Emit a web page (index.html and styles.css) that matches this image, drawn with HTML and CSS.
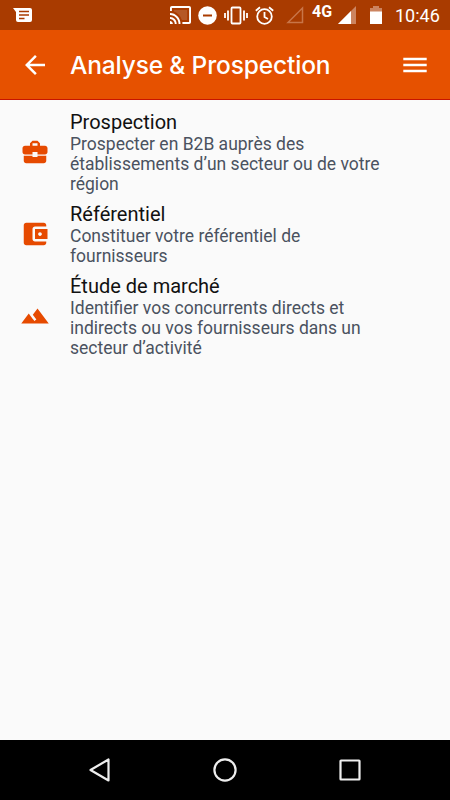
FILE: index.html
```html
<!DOCTYPE html>
<html lang="fr">
<head>
<meta charset="utf-8">
<title>Analyse &amp; Prospection</title>
<link rel="stylesheet" href="styles.css">
</head>
<body>
<div class="screen">
  <div class="status">
    <svg class="message" width="20" height="16" viewBox="0 0 20 16"><path fill="#fff" d="M0 1h17q2 0 2 2v10q0 2-2 2H5q-2 0-2-2V5z"/><path stroke="#a93b00" stroke-width="1.300" d="M6 4.500h10M6 8h10M6 11.500h5.500"/></svg>
    <svg class="cast" width="21" height="18" viewBox="1 3 22 18" preserveAspectRatio="none"><path fill="#fff" d="M21 3H3c-1.100 0-2 .9-2 2v3h2V5h18v14h-7v2h7c1.100 0 2-.9 2-2V5c0-1.100-.9-2-2-2zM1 18v3h3c0-1.660-1.340-3-3-3zm0-4v2c2.760 0 5 2.240 5 5h2c0-3.870-3.130-7-7-7zm0-4v2c4.970 0 9 4.030 9 9h2c0-6.080-4.930-11-11-11z"/><path fill="#fff" fill-opacity=".15" d="M5 7v1.600C9 9.900 12.100 13 13.400 17H19V7z"/></svg>
    <svg class="dnd" width="19" height="19" viewBox="0 0 19 19"><circle cx="9.500" cy="9.500" r="9.300" fill="#fff"/><path stroke="#a93b00" stroke-width="2" d="M5 9.500h9"/></svg>
    <svg class="vibrate" width="24" height="19" viewBox="0 0 24 19"><g fill="none" stroke="#fff" stroke-width="1.800"><rect x="7.500" y="1.500" width="9" height="16" rx="1"/><path d="M4 4.500v10M1 7v5M20 4.500v10M23 7v5"/></g></svg>
    <svg class="alarm" width="19" height="19" viewBox="0 0 19 19"><g fill="none" stroke="#fff" stroke-width="1.800"><circle cx="9.500" cy="10.500" r="7.300"/><path d="M9.500 6v5l3.500 2M.8 4.800 5 1.300M18.200 4.800 14 1.300"/></g></svg>
    <svg class="nosim" width="18" height="18" viewBox="0 0 18 18"><path fill="none" stroke="#c87548" stroke-width="1.500" d="M2 16.500 16.500 2v14.500z"/></svg>
    <span class="network">4G</span>
    <svg class="signal" width="18" height="18" viewBox="0 0 18 18"><path fill="#cc8460" d="M0 18 18 0v18z"/><path fill="#fff" d="M0 18 13 5v13z"/></svg>
    <svg class="battery" width="12" height="18" viewBox="0 0 12 18"><path fill="#cc8460" d="M0 2h3V0h6v2h3v5H0z"/><path fill="#fff" d="M0 5.500h12V18H0z"/></svg>
    <span class="clock">10:46</span>
  </div>
  <header class="bar">
    <svg class="back" width="30" height="30" viewBox="0 0 24 24"><path fill="#fff" d="M20 11H7.830l5.590-5.590L12 4l-8 8 8 8 1.410-1.410L7.830 13H20v-2z"/></svg>
    <h1>Analyse &amp; Prospection</h1>
    <svg class="menu" width="24" height="18" viewBox="0 0 24 18"><path stroke="#fff" stroke-width="2.700" d="M.3 3h23.400M.3 9h23.400M.3 15h23.400"/></svg>
  </header>
  <main>
    <section class="item">
      <svg class="icon" viewBox="0 0 24 24"><path d="M10 16v-1H3.010L3 19c0 1.110.890 2 2 2h14c1.110 0 2-.890 2-2v-4h-7v1h-4zm10-9h-4.010V5l-2-2h-4l-2 2v2H4c-1.100 0-2 .9-2 2v3c0 1.110.890 2 2 2h6v-2h4v2h6c1.100 0 2-.9 2-2V9c0-1.100-.9-2-2-2zm-6 0h-4V5h4v2z"/></svg>
      <div><h2>Prospection</h2><p>Prospecter en B2B auprès des<br>établissements d’un secteur ou de votre<br>région</p></div>
    </section>
    <section class="item">
      <svg class="icon" viewBox="0 0 24 24"><path d="M21 18v1c0 1.100-.9 2-2 2H5c-1.110 0-2-.9-2-2V5c0-1.100.890-2 2-2h14c1.100 0 2 .9 2 2v1h-9c-1.110 0-2 .9-2 2v8c0 1.100.890 2 2 2h9zm-9-2h10V8H12v8zm4-2.500c-.830 0-1.500-.670-1.500-1.500s.670-1.500 1.500-1.500 1.500.670 1.500 1.500-.670 1.500-1.500 1.500z"/></svg>
      <div><h2>Référentiel</h2><p>Constituer votre référentiel de<br>fournisseurs</p></div>
    </section>
    <section class="item">
      <svg class="icon" viewBox="0 0 24 24"><path d="M14 6l-3.750 5 2.850 3.800-1.600 1.200C9.810 13.750 7 10 7 10l-6 8h22L14 6z"/></svg>
      <div><h2>Étude de marché</h2><p>Identifier vos concurrents directs et<br>indirects ou vos fournisseurs dans un<br>secteur d’activité</p></div>
    </section>
  </main>
  <nav>
    <svg width="24" height="26" viewBox="0 0 24 26"><path fill="none" stroke="#eee" stroke-width="2.200" stroke-linejoin="round" d="M2.500 13 20.500 2.500v21z"/></svg>
    <svg width="24" height="24" viewBox="0 0 24 24"><circle cx="12" cy="12" r="10.600" fill="none" stroke="#eee" stroke-width="2.200"/></svg>
    <svg width="24" height="24" viewBox="0 0 24 24"><rect x="2.500" y="2.500" width="19" height="19" rx=".5" fill="none" stroke="#eee" stroke-width="2.200"/></svg>
  </nav>
</div>
</body>
</html>
```
FILE: styles.css
```css
* { box-sizing: border-box; }
body { margin: 0; font-family: Roboto, sans-serif; background: #fafafa; }
h1, h2, p { margin: 0; font-weight: 400; white-space: nowrap; }
svg { display: block; flex: none; }
.screen { width: 450px; height: 800px; display: flex; flex-direction: column; overflow: hidden; }
.status { height: 30px; flex: none; display: flex; align-items: center; background: #a93b00; color: #fff; }
.message { margin-left: 13px; }
.cast { margin-left: 137px; }
.dnd { margin-left: 7px; }
.vibrate { margin-left: 7px; }
.alarm { margin-left: 7px; }
.nosim { margin-left: 12px; }
.network { width: 22px; margin-left: 8px; padding-bottom: 7px; font-size: 16px; line-height: 16px; font-weight: 700; }
.signal { margin-left: 4px; }
.battery { margin-left: 14px; }
.clock { margin-left: 13px; font-size: 18px; line-height: 32px; padding-top: 1px; }
.bar { height: 70px; flex: none; display: flex; align-items: center; background: #e65100; border-bottom: 1px solid #c81400; color: #fff; }
.back { margin-left: 20px; }
.bar h1 { margin-left: 20px; width: 260px; font: 500 24.500px/34px Inter, sans-serif; letter-spacing: -.15px; }
.menu { margin-left: 73px; }
main { flex: 1; padding-top: 10px; display: flex; flex-direction: column; gap: 8px; background: #fafafa; }
.item { display: flex; align-items: center; }
.icon { width: 30px; height: 30px; margin: 0 20px; fill: #e64a00; }
.item h2 { font-size: 20px; line-height: 24px; color: #111; }
.item p { font-size: 17.500px; line-height: 20px; color: #4a5260; }
nav { height: 60px; flex: none; display: flex; align-items: center; justify-content: space-between; padding: 0 88px; background: #000; }
```
